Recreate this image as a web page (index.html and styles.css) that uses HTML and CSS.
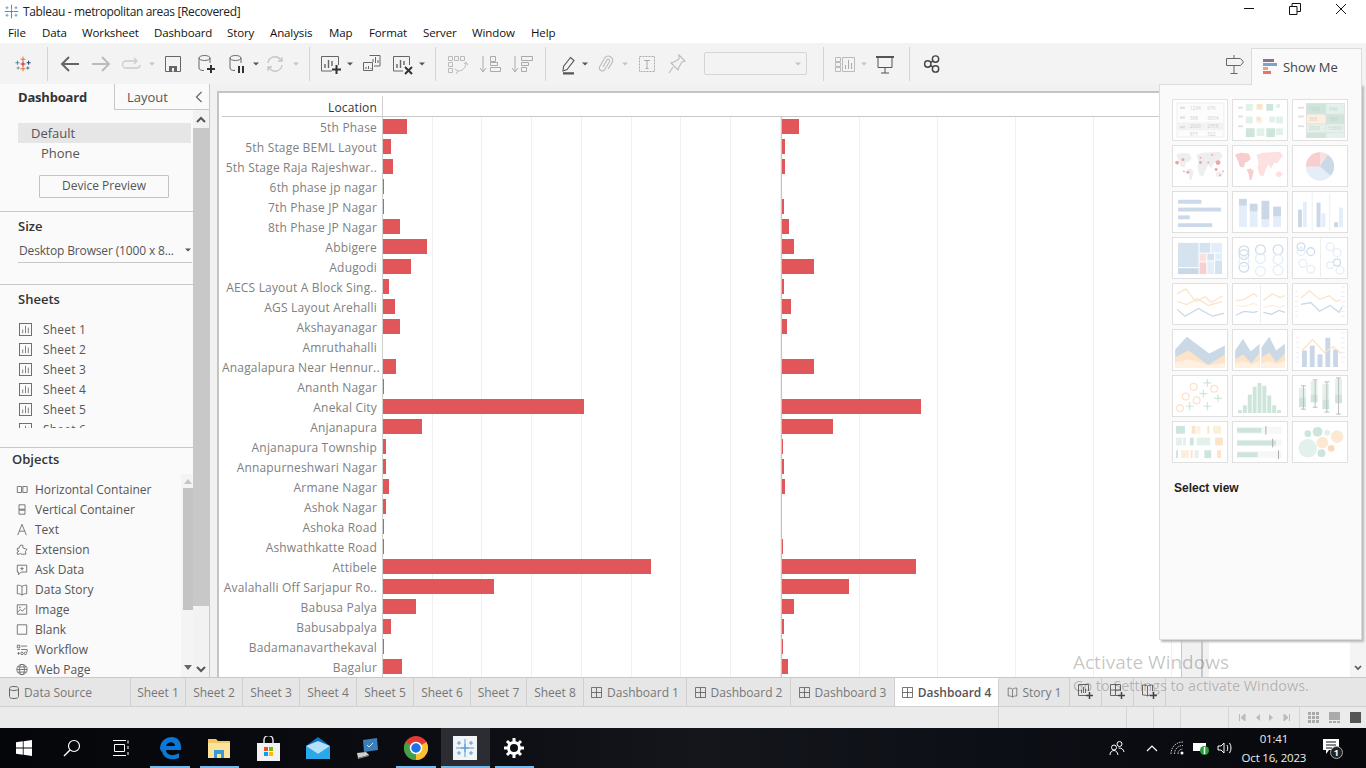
FILE: index.html
```html
<!DOCTYPE html>
<html lang="en">
<head>
<meta charset="utf-8">
<title>Tableau - metropolitan areas [Recovered]</title>
<link rel="stylesheet" href="styles.css">
</head>
<body>
<svg class="sprite" width="0" height="0">
  <symbol id="sheet" viewBox="0 0 14 14"><rect x=".5" y=".5" width="13" height="13" fill="none" stroke="#666"/><path d="M4 11V7M7 11V3M10 11V5" stroke="#777" fill="none"/></symbol>
  <symbol id="dash" viewBox="0 0 12 12"><path d="M.5.5h11v11H.5zM6 .5v11M.5 6h11" fill="none" stroke="#666"/></symbol>
  <symbol id="snow" viewBox="0 0 20 20"><g stroke="#3f8fc4" stroke-width="1.400" fill="none"><path d="M10 1v6M10 13v6M1 10h6M13 10h6M7.500 10h5M10 7.500v5"/><path d="M4 3v4M2 5h4M16 3v4M14 5h4M4 13v4M2 15h4M16 13v4M14 15h4" stroke="#6aa9d2"/></g></symbol>
</svg>

<header class="titlebar">
  <svg class="title-icon" width="15" height="15"><use href="#snow"/></svg>
  <span class="title-text">Tableau - metropolitan areas [Recovered]</span>
  <div class="win-controls">
    <svg width="12" height="12" viewBox="0 0 12 12"><path d="M1 5.500h10" stroke="#111"/></svg>
    <svg width="12" height="12" viewBox="0 0 12 12"><path d="M.5 3.500h7.500v8H.5zM3 3.500V.5h8.500v8H8" fill="none" stroke="#111"/></svg>
    <svg width="12" height="12" viewBox="0 0 12 12"><path d="M1 1l10 10M11 1L1 11" stroke="#111"/></svg>
  </div>
</header>

<nav class="menubar">
  <span>File</span><span>Data</span><span>Worksheet</span><span>Dashboard</span><span>Story</span><span>Analysis</span><span>Map</span><span>Format</span><span>Server</span><span>Window</span><span>Help</span>
</nav>

<div class="toolbar">
  <svg class="ic" viewBox="-3 -3 30 30"><g fill="none" stroke-width="1.300"><path d="M12 3v6M9 6h6M12 15v6M9 18h6" stroke="#e8762b"/><path d="M5 8v5M2.500 10.500h5" stroke="#59879b"/><path d="M19 8v5M16.500 10.500h5" stroke="#1f447a"/><path d="M12 9v6M9 12h6" stroke="#c72037"/><path d="M6 15v4M4 17h4" stroke="#7099a6"/><path d="M18 15v4M16 17h4" stroke="#5b6591"/></g></svg>
  <i class="div m12"></i>
  <svg class="ic m10" viewBox="0 0 24 24"><path d="M21 12H5M11 5l-7 7 7 7" fill="none" stroke="#666" stroke-width="2"/></svg>
  <svg class="ic m7" viewBox="0 0 24 24"><path d="M3 12h16M13 5l7 7-7 7" fill="none" stroke="#bbb" stroke-width="2"/></svg>
  <svg class="ic m6" viewBox="0 0 24 24"><path d="M17 9H7a3 3 0 0 0 0 7h11a3 3 0 0 0 3-3M15 6l3 3-3 3" fill="none" stroke="#ccc" stroke-width="1.300"/></svg>
  <b class="caret off m5"></b>
  <svg class="ic m5" viewBox="0 0 24 24"><path d="M4.500 4.500h15v15h-15z" fill="none" stroke="#666"/><path d="M8 14h8v5.500H8z" fill="#666"/><path d="M11 16h2v3.500h-2z" fill="#f3f3f3"/></svg>
  <svg class="ic m8" viewBox="0 0 24 24"><path d="M6 6v10c0 1.500 1.500 2.500 5 2.500M17 6v5" fill="none" stroke="#666"/><ellipse cx="11.500" cy="6" rx="5.500" ry="2.500" fill="none" stroke="#666"/><path d="M18 13v8M14 17h8" stroke="#333" stroke-width="2"/></svg>
  <svg class="ic m7" viewBox="0 0 24 24"><path d="M6 6v10c0 1.500 1.500 2.500 5 2.500M17 6v5" fill="none" stroke="#666"/><ellipse cx="11.500" cy="6" rx="5.500" ry="2.500" fill="none" stroke="#666"/><path d="M15 14v7M19 14v7" stroke="#333" stroke-width="2"/></svg>
  <b class="caret m4"></b>
  <svg class="ic m3" viewBox="0 0 24 24"><path d="M5 11a7 7 0 0 1 12-4l2 2M19 13a7 7 0 0 1-12 4l-2-2M19 5v4h-4M5 19v-4h4" fill="none" stroke="#c4c4c4" stroke-width="1.300"/></svg>
  <b class="caret off m5"></b>
  <i class="div m9"></i>
  <svg class="ic m8" viewBox="0 0 24 24"><path d="M14 19H3.500V4.500h17V13" fill="none" stroke="#666"/><path d="M7 16v-4M10.500 16V8M14 14V9" stroke="#666" stroke-width="1.400"/><path d="M18.500 13v9M14 17.500h9" stroke="#333" stroke-width="2"/></svg>
  <b class="caret m4"></b>
  <svg class="ic m5" viewBox="0 0 24 24"><path d="M10.500 3.500H21v10.500h-6M4.500 10.500h9v8h-9z" fill="none" stroke="#666"/><path d="M14 10V7M16.500 11V5M19 11V8M7 17v-2M9.500 17v-3M12 17v-1" stroke="#666"/></svg>
  <svg class="ic m7" viewBox="0 0 24 24"><path d="M13 19H3.500V4.500h16V13" fill="none" stroke="#666"/><path d="M7 16v-4M10.500 16V8M14 13V9" stroke="#666" stroke-width="1.400"/><path d="M15 15l7 7M22 15l-7 7" stroke="#333" stroke-width="2"/></svg>
  <b class="caret m4"></b>
  <i class="div m9"></i>
  <svg class="ic m9" viewBox="0 0 24 24"><path d="M3.500 4.500h4v4h-4zM9.500 4.500h4v4h-4zM15.500 4.500h4v4h-4zM3.500 10.500h4v4h-4zM3.500 16.500h4v4h-4z" fill="none" stroke="#bbb"/><path d="M21 11c0 5-4 8-8 8M10 17l3 2-2 3M19 12l2-2 2 3" fill="none" stroke="#bbb"/></svg>
  <svg class="ic m9" viewBox="0 0 24 24"><path d="M5 4v15M2 16l3 4 3-4" fill="none" stroke="#aaa"/><path d="M12.500 4.500h5v5h-5zM12.500 10.500h7v3h-7zM12.500 15.500h10v4h-10z" fill="none" stroke="#aaa"/></svg>
  <svg class="ic m8" viewBox="0 0 24 24"><path d="M5 4v15M2 16l3 4 3-4" fill="none" stroke="#aaa"/><path d="M11.500 4.500h11v4h-11zM11.500 10.500h7v3h-7zM11.500 15.500h5v4h-5z" fill="none" stroke="#aaa"/></svg>
  <i class="div m11"></i>
  <svg class="ic m10" viewBox="0 0 24 24"><path d="M14.500 5.500l3.500 3-7 9-4 1.500.5-4.500zM7 21h11" fill="none" stroke="#555" stroke-width="1.100"/><path d="M7 21.500h11" stroke="#555" stroke-width="2"/></svg>
  <b class="caret m1"></b>
  <svg class="ic m4" viewBox="0 0 24 24"><path d="M10 15l4-7a1.500 1.500 0 0 1 2.600 1.500L11.500 18a3 3 0 0 1-5-3l5.500-9.500a4.500 4.500 0 0 1 7.500 4.500L15 17" fill="none" stroke="#bbb" stroke-width="1.100"/></svg>
  <b class="caret off m4"></b>
  <svg class="ic m6" viewBox="0 0 24 24"><path d="M4.500 4.500h15v15h-15z" fill="none" stroke="#aaa" stroke-dasharray="2 1"/><path d="M9 8.500h6M12 8.500v8M10.500 16.500h3" stroke="#aaa" fill="none"/></svg>
  <svg class="ic m6" viewBox="0 0 24 24"><path d="M14 3l6 6-3 1-3 5-1 3-7-7 3-1 5-3zM8 15l-4 6" fill="none" stroke="#bbb" stroke-width="1.100"/></svg>
  <div class="tb-select m15"><b class="caret off"></b></div>
  <i class="div m16"></i>
  <svg class="ic m9" viewBox="0 0 24 24"><path d="M2.500 5.500h5v4h-5zM2.500 10.500h5v4h-5zM2.500 15.500h5v4h-5zM9.500 5.500h12v14h-12z" fill="none" stroke="#bbb"/><path d="M12.500 17v-4M15.500 17V8M18.500 17v-6" stroke="#aaa"/></svg>
  <b class="caret off m3"></b>
  <svg class="ic m5" viewBox="0 0 24 24"><path d="M3 5h18" stroke="#555" stroke-width="2"/><path d="M5 5v10.500h14V5M12 15.500V21M8 21h8" fill="none" stroke="#555"/></svg>
  <i class="div m12"></i>
  <svg class="ic m10" viewBox="-5 -5 34 34"><g fill="none" stroke="#444" stroke-width="2"><circle cx="6" cy="12" r="4.500"/><circle cx="17" cy="5" r="4.500"/><circle cx="17" cy="19" r="4.500"/><path d="M10 10l3.500-2.500M10 14l3.500 2.500"/></g></svg>
  <svg class="ic sign" viewBox="0 0 24 24"><path d="M3.500 6.500h14l3 3.500-3 3.500h-14zM11 3v3M11 14v8M7.500 21.500h7" fill="none" stroke="#666"/></svg>
</div>

<main class="workspace">
  <aside class="side">
    <div class="side-tabs">
      <span class="stab active">Dashboard</span>
      <span class="stab">Layout</span>
      <svg class="collapse" width="8" height="12" viewBox="0 0 8 12"><path d="M6.500 1l-5 5 5 5" fill="none" stroke="#666" stroke-width="1.200"/></svg>
    </div>
    <div class="side-body">
      <div class="side-col">
        <section class="sec sec-dash">
          <div class="device selected">Default</div>
          <div class="device phone">Phone</div>
          <div class="btn">Device Preview</div>
        </section>
        <section class="sec sec-size">
          <h3>Size</h3>
          <div class="size-select"><span>Desktop Browser (1000 x 8...</span><b class="caret"></b></div>
        </section>
        <section class="sec sec-sheets">
          <h3>Sheets</h3>
          <ul class="sheets">
            <li><svg width="13" height="13"><use href="#sheet"/></svg>Sheet 1</li>
            <li><svg width="13" height="13"><use href="#sheet"/></svg>Sheet 2</li>
            <li><svg width="13" height="13"><use href="#sheet"/></svg>Sheet 3</li>
            <li><svg width="13" height="13"><use href="#sheet"/></svg>Sheet 4</li>
            <li><svg width="13" height="13"><use href="#sheet"/></svg>Sheet 5</li>
            <li><svg width="13" height="13"><use href="#sheet"/></svg>Sheet 6</li>
          </ul>
        </section>
        <section class="sec sec-objects">
          <h3 class="obj-title">Objects</h3>
          <div class="obj-wrap">
            <ul class="objects">
              <li><svg viewBox="0 0 14 14"><path d="M1.500 3.500h5v7h-5zM8 3.500h5v7H8z" fill="none" stroke="#666"/></svg>Horizontal Container</li>
              <li><svg viewBox="0 0 14 14"><path d="M3.500 1.500h7v11h-7z" fill="none" stroke="#666"/><path d="M3.500 6h7v2.500h-7z" fill="#888"/></svg>Vertical Container</li>
              <li><svg viewBox="0 0 14 14"><path d="M2 13.500L7 1l5 12.500M4 9h6" fill="none" stroke="#666"/></svg>Text</li>
              <li><svg viewBox="0 0 14 14"><path d="M1.500 5.500h2L5 2h3v3l5 2-2 2 .5 3.500H6l-1-1-1 1H1.500V10l2-1-2-1z" fill="none" stroke="#666"/></svg>Extension</li>
              <li><svg viewBox="0 0 14 14"><path d="M1.500 2h11v8H6l-3 3v-3H1.500z" fill="none" stroke="#666"/><path d="M5 6h4M7 4v4" stroke="#666"/></svg>Ask Data</li>
              <li><svg viewBox="0 0 14 14"><path d="M7 3.500C5.500 2 3 2 1.500 2v10c1.500 0 4 0 5.500 1.500 1.500-1.500 4-1.500 5.500-1.500V2C11 2 8.500 2 7 3.500zM7 3.500v10" fill="none" stroke="#666"/></svg>Data Story</li>
              <li><svg viewBox="0 0 14 14"><path d="M1.500 1.500h11v11h-11z" fill="none" stroke="#666"/><path d="M2 10l3-3 2.500 2L11 5" fill="none" stroke="#666"/><circle cx="4.500" cy="4.500" r="1" fill="#888"/></svg>Image</li>
              <li><svg viewBox="0 0 14 14"><path d="M1.500 1.500h11v11h-11z" fill="none" stroke="#666"/></svg>Blank</li>
              <li><svg viewBox="0 0 14 14"><path d="M1.500 2h3v3h-3zM6 3h7M6 7h7v3M1.500 7h3M3 10v3M1.500 11.500h3" fill="none" stroke="#666"/><circle cx="11" cy="11.500" r="1.500" fill="none" stroke="#666"/><circle cx="7" cy="11.500" r="1.500" fill="none" stroke="#666"/></svg>Workflow</li>
              <li><svg viewBox="0 0 14 14"><g fill="none" stroke="#666"><circle cx="7" cy="7" r="6"/><ellipse cx="7" cy="7" rx="2.800" ry="6"/><path d="M1 7h12M2 4h10M2 10h10"/></g></svg>Web Page</li>
            </ul>
            <div class="inner-scroll">
              <i class="up-tri"></i>
              <i class="inner-thumb"></i>
              <i class="down-tri"></i>
            </div>
          </div>
        </section>
      </div>
      <div class="outer-scroll">
        <svg class="chev" width="12" height="10" viewBox="0 0 12 10"><path d="M2 7l4-4 4 4" fill="none" stroke="#555" stroke-width="2"/></svg>
        <i class="outer-thumb"></i>
        <svg class="chev end" width="12" height="10" viewBox="0 0 12 10"><path d="M2 3l4 4 4-4" fill="none" stroke="#555" stroke-width="2"/></svg>
      </div>
    </div>
  </aside>

  <div class="canvas">
    <div class="frame">
      <div class="chart-head"><span class="loc-label">Location</span><span class="loc-rest"></span></div>
      <div class="rows">
        <div class="row"><span class="lab">5th Phase</span><div class="pl"><i class="bar" style="width:24px"></i></div><div class="pr"><i class="bar" style="width:17px"></i></div></div>
        <div class="row"><span class="lab">5th Stage BEML Layout</span><div class="pl"><i class="bar" style="width:8px"></i></div><div class="pr"><i class="bar" style="width:3px"></i></div></div>
        <div class="row"><span class="lab">5th Stage Raja Rajeshwar..</span><div class="pl"><i class="bar" style="width:10px"></i></div><div class="pr"><i class="bar" style="width:3px"></i></div></div>
        <div class="row"><span class="lab">6th phase jp nagar</span><div class="pl"><i class="bar" style="width:1px"></i></div><div class="pr"></div></div>
        <div class="row"><span class="lab">7th Phase JP Nagar</span><div class="pl"><i class="bar" style="width:1px"></i></div><div class="pr"><i class="bar" style="width:2px"></i></div></div>
        <div class="row"><span class="lab">8th Phase JP Nagar</span><div class="pl"><i class="bar" style="width:17px"></i></div><div class="pr"><i class="bar" style="width:7px"></i></div></div>
        <div class="row"><span class="lab">Abbigere</span><div class="pl"><i class="bar" style="width:44px"></i></div><div class="pr"><i class="bar" style="width:12px"></i></div></div>
        <div class="row"><span class="lab">Adugodi</span><div class="pl"><i class="bar" style="width:28px"></i></div><div class="pr"><i class="bar" style="width:32px"></i></div></div>
        <div class="row"><span class="lab">AECS Layout A Block Sing..</span><div class="pl"><i class="bar" style="width:6px"></i></div><div class="pr"><i class="bar" style="width:2px"></i></div></div>
        <div class="row"><span class="lab">AGS Layout Arehalli</span><div class="pl"><i class="bar" style="width:12px"></i></div><div class="pr"><i class="bar" style="width:9px"></i></div></div>
        <div class="row"><span class="lab">Akshayanagar</span><div class="pl"><i class="bar" style="width:17px"></i></div><div class="pr"><i class="bar" style="width:5px"></i></div></div>
        <div class="row"><span class="lab">Amruthahalli</span><div class="pl"></div><div class="pr"></div></div>
        <div class="row"><span class="lab">Anagalapura Near Hennur..</span><div class="pl"><i class="bar" style="width:13px"></i></div><div class="pr"><i class="bar" style="width:32px"></i></div></div>
        <div class="row"><span class="lab">Ananth Nagar</span><div class="pl"><i class="bar" style="width:1px"></i></div><div class="pr"></div></div>
        <div class="row"><span class="lab">Anekal City</span><div class="pl"><i class="bar" style="width:201px"></i></div><div class="pr"><i class="bar" style="width:139px"></i></div></div>
        <div class="row"><span class="lab">Anjanapura</span><div class="pl"><i class="bar" style="width:39px"></i></div><div class="pr"><i class="bar" style="width:51px"></i></div></div>
        <div class="row"><span class="lab">Anjanapura Township</span><div class="pl"><i class="bar" style="width:3px"></i></div><div class="pr"><i class="bar" style="width:1px"></i></div></div>
        <div class="row"><span class="lab">Annapurneshwari Nagar</span><div class="pl"><i class="bar" style="width:3px"></i></div><div class="pr"><i class="bar" style="width:2px"></i></div></div>
        <div class="row"><span class="lab">Armane Nagar</span><div class="pl"><i class="bar" style="width:6px"></i></div><div class="pr"><i class="bar" style="width:3px"></i></div></div>
        <div class="row"><span class="lab">Ashok Nagar</span><div class="pl"><i class="bar" style="width:3px"></i></div><div class="pr"></div></div>
        <div class="row"><span class="lab">Ashoka Road</span><div class="pl"><i class="bar" style="width:1px"></i></div><div class="pr"></div></div>
        <div class="row"><span class="lab">Ashwathkatte Road</span><div class="pl"><i class="bar" style="width:1px"></i></div><div class="pr"><i class="bar" style="width:1px"></i></div></div>
        <div class="row"><span class="lab">Attibele</span><div class="pl"><i class="bar" style="width:268px"></i></div><div class="pr"><i class="bar" style="width:134px"></i></div></div>
        <div class="row"><span class="lab">Avalahalli Off Sarjapur Ro..</span><div class="pl"><i class="bar" style="width:111px"></i></div><div class="pr"><i class="bar" style="width:67px"></i></div></div>
        <div class="row"><span class="lab">Babusa Palya</span><div class="pl"><i class="bar" style="width:33px"></i></div><div class="pr"><i class="bar" style="width:12px"></i></div></div>
        <div class="row"><span class="lab">Babusabpalya</span><div class="pl"><i class="bar" style="width:8px"></i></div><div class="pr"><i class="bar" style="width:2px"></i></div></div>
        <div class="row"><span class="lab">Badamanavarthekaval</span><div class="pl"><i class="bar" style="width:1px"></i></div><div class="pr"><i class="bar" style="width:1px"></i></div></div>
        <div class="row"><span class="lab">Bagalur</span><div class="pl"><i class="bar" style="width:19px"></i></div><div class="pr"><i class="bar" style="width:6px"></i></div></div>
      </div>
    </div>
    <div class="strip"></div>
    <div class="blank"></div>
    <div class="right-scroll"><svg width="10" height="8" viewBox="0 0 10 8"><path d="M2 2l3 3 3-3" fill="none" stroke="#555" stroke-width="1.600"/></svg></div>
  </div>
</main>

<div class="showme-tab">
  <svg width="14" height="16" viewBox="0 0 14 16"><path d="M0 0h11v3H0z" fill="#8a7099"/><path d="M0 4h14v3H0z" fill="#7fa3c8"/><path d="M0 8h5v3H0z" fill="#f2a26b"/><path d="M0 12h8v3H0z" fill="#ee6f72"/></svg>
  <span>Show Me</span>
</div>
<aside class="showme">
  <div class="thumbs">
    <div class="thumb"><svg viewBox="0 0 55 41"><rect x="4" y="3" width="48" height="35" fill="#fcfcfc" stroke="#eee"/><rect x="4" y="23" width="48" height="8" fill="#f3f3f3"/><path d="M7 8h5M7 18h5M7 28h5" stroke="#ddd" stroke-width="2"/><g class="t-txt"><text x="17" y="10">1234</text><text x="35" y="10">676</text><text x="17" y="20">368</text><text x="35" y="20">3034</text><text x="17" y="29">2929</text><text x="35" y="29">2558</text><text x="17" y="37">971</text><text x="35" y="37">322</text></g></svg></div>
    <div class="thumb"><svg viewBox="0 0 55 41"><path d="M5 8h5M5 17h5M5 27h5" stroke="#e2e2e2" stroke-width="2"/><g fill="#e2f1e9"><rect x="13" y="4" width="7" height="7"/><rect x="13" y="17" width="7" height="7"/><rect x="37" y="17" width="6" height="6"/><rect x="44" y="17" width="7" height="7"/><rect x="24" y="29" width="8" height="8"/><rect x="44" y="29" width="7" height="7"/></g><g fill="#cde5da"><rect x="34" y="4" width="7" height="7"/><rect x="13" y="29" width="9" height="9"/><rect x="34" y="29" width="9" height="9"/><rect x="24" y="18" width="6" height="6" fill="#fdf1e3"/></g><rect x="24" y="4" width="6" height="6" fill="#fde3c8"/><rect x="24" y="17" width="4" height="4" fill="#fde3c8"/><rect x="44" y="4" width="4" height="4" fill="#e2f1e9"/></svg></div>
    <div class="thumb"><svg viewBox="0 0 55 41"><path d="M5 8h6M5 17h6M5 27h6" stroke="#e2e2e2" stroke-width="2"/><path d="M13 3h40v36H13z" fill="#e2e2e2"/><rect x="14" y="4" width="19" height="10" fill="#cde5da"/><rect x="34" y="4" width="18" height="10" fill="#e2f1e9"/><rect x="14" y="15" width="19" height="9" fill="#feeedd"/><rect x="34" y="15" width="18" height="9" fill="#cde5da"/><rect x="14" y="25" width="19" height="8" fill="#e2f1e9"/><rect x="34" y="25" width="18" height="8" fill="#e2f1e9"/><rect x="14" y="34" width="19" height="5" fill="#cde5da"/><rect x="34" y="34" width="18" height="5" fill="#e2f1e9"/><g class="t-txt"><text x="16" y="11">1234</text><text x="37" y="11">546</text><text x="16" y="22">368</text><text x="37" y="22">368</text><text x="16" y="31">2929</text><text x="36" y="31">53890</text></g></svg></div>

    <div class="thumb"><svg viewBox="0 0 55 41"><path d="M3 9l6-2 8 1 2 5-3 3-3 1-1 5-4-1-2-6zM14 24l4-1 3 3-2 8-2 1-1-6zM24 9l6-2 18-1 3 4-4 5-2 3-3-1-3 6-3-4-3 6-2 6-4-1-2-8 1-5zM44 27l4-1 3 3-3 3-4-1z" fill="#eeeeee"/><g fill="#e9a7a7"><circle cx="4" cy="17" r="2"/><circle cx="10" cy="14" r="1.500"/><circle cx="28" cy="12" r="1"/><circle cx="28" cy="17" r="1.500"/><circle cx="40" cy="9" r="1"/><circle cx="46" cy="17" r="2.500"/><circle cx="36" cy="17" r="1"/><circle cx="44" cy="24" r="1.500"/><circle cx="51" cy="26" r="1"/><circle cx="48" cy="30" r="1"/><circle cx="11" cy="26" r="1"/><circle cx="15" cy="27" r="1.500"/></g></svg></div>
    <div class="thumb"><svg viewBox="0 0 55 41"><path d="M2 9l6-2 8 1 2 5-3 3-3 1-1 5-4-1-2-6zM14 24l4-1 3 3-2 8-2 1-1-6zM24 9l6-2 18-1 3 4-4 5-2 3-3-1-3 6-3-4-3 6-2 6-4-1-2-8 1-5zM44 27l4-1 3 3-3 3-4-1z" fill="#fde1e1"/><path d="M2 9l6-2 8 1 2 5-3 3-3 1-1 5-4-1-2-6zM14 24l4-1 3 3-2 8-2 1-1-6z" fill="#f8cdcd"/></svg></div>
    <div class="thumb"><svg viewBox="0 0 55 41"><circle cx="27.500" cy="21" r="14.500" fill="#e5eef8"/><path d="M27.500 21L27.500 6.500A14.500 14.500 0 0 0 13 21z" fill="#f7cfcf"/><path d="M27.500 21V6.500a14.500 14.500 0 0 1 8 2.500z" fill="#fbe0e0"/><path d="M27.500 21l8-12a14.500 14.500 0 0 1 3 21.500z" fill="#cbd9e7"/></svg></div>

    <div class="thumb"><svg viewBox="0 0 55 41"><g fill="#ccd9e8"><rect x="5" y="8" width="24" height="4"/><rect x="5" y="16" width="44" height="4"/><rect x="5" y="24" width="12" height="4"/><rect x="5" y="32" width="35" height="4"/></g></svg></div>
    <div class="thumb"><svg viewBox="0 0 55 41"><g fill="#e3eefa"><rect x="6" y="14" width="8" height="22"/><rect x="17" y="20" width="8" height="16"/><rect x="29" y="28" width="8" height="8"/><rect x="41" y="25" width="8" height="11"/></g><g fill="#c9d7e6"><rect x="6" y="7" width="8" height="7"/><rect x="17" y="12" width="8" height="8"/><rect x="29" y="9" width="8" height="19"/><rect x="41" y="15" width="8" height="10"/></g></svg></div>
    <div class="thumb"><svg viewBox="0 0 55 41"><path d="M19.500 1v39M37.500 1v39" stroke="#eee"/><rect x="5" y="18" width="4" height="18" fill="#c9d7e6"/><rect x="10" y="10" width="4" height="26" fill="#e3eefa"/><rect x="24" y="11" width="4" height="25" fill="#c9d7e6"/><rect x="29" y="22" width="4" height="14" fill="#e3eefa"/><rect x="42" y="31" width="4" height="5" fill="#c9d7e6"/><rect x="47" y="16" width="4" height="20" fill="#e3eefa"/></svg></div>

    <div class="thumb"><svg viewBox="0 0 55 41"><rect x="5" y="5" width="21" height="25" fill="#d5e2ef"/><rect x="5" y="31" width="21" height="6" fill="#c9d7e6"/><rect x="27" y="5" width="11" height="10" fill="#d5e2ef"/><rect x="39" y="5" width="11" height="10" fill="#e3eefa"/><rect x="27" y="16" width="7" height="8" fill="#fbe0e0"/><rect x="35" y="16" width="7" height="7" fill="#d5e2ef"/><rect x="43" y="16" width="7" height="6" fill="#e3eefa"/><rect x="27" y="25" width="7" height="12" fill="#f7cfcf"/><rect x="35" y="24" width="7" height="13" fill="#e3eefa"/><rect x="43" y="23" width="7" height="14" fill="#d5e2ef"/></svg></div>
    <div class="thumb"><svg viewBox="0 0 55 41"><g fill="none" stroke="#cfdce9" stroke-width="1.300"><circle cx="11" cy="13" r="5"/><circle cx="11" cy="17" r="5"/><circle cx="28" cy="12" r="5"/><circle cx="46" cy="12" r="5"/><circle cx="11" cy="30" r="5"/></g><g fill="none" stroke="#e3eefa" stroke-width="1.300"><circle cx="11" cy="24" r="5"/><circle cx="28" cy="21" r="5"/><circle cx="28" cy="34" r="5"/><circle cx="46" cy="22" r="5"/><circle cx="46" cy="33" r="5"/></g></svg></div>
    <div class="thumb"><svg viewBox="0 0 55 41"><path d="M28 1v39" stroke="#eee"/><g fill="none" stroke="#cfdce9" stroke-width="1.300"><circle cx="8" cy="9" r="4"/><circle cx="18" cy="14" r="4"/><circle cx="45" cy="25" r="3.500"/></g><g fill="none" stroke="#e3eefa" stroke-width="1.300"><circle cx="8" cy="14" r="4"/><circle cx="38" cy="9" r="4"/><circle cx="45" cy="15" r="4"/><circle cx="10" cy="26" r="4"/><circle cx="18" cy="32" r="4"/><circle cx="38" cy="28" r="3.500"/><circle cx="48" cy="33" r="4"/></g></svg></div>

    <div class="thumb"><svg viewBox="0 0 55 41"><g fill="none" stroke-width="1.300"><path d="M4 10l9-5 10 13 10-5 6 6 12-7" stroke="#fde3c8"/><path d="M4 18l10 3 11-6 11 7 14-4" stroke="#fde3c8"/><path d="M4 26l8 7 14-8 14 8 12-3" stroke="#c9d7e6"/></g></svg></div>
    <div class="thumb"><svg viewBox="0 0 55 41"><path d="M28 1v39" stroke="#eee"/><g fill="none" stroke-width="1.300"><path d="M3 17l8-1 10-6 4 3" stroke="#fde3c8"/><path d="M3 22l8 1 10-3 4 2" stroke="#fdf0dd"/><path d="M3 32l8-4 10 1 4-1" stroke="#c9d7e6"/><path d="M31 17l9-7 8 4 5-2" stroke="#fde3c8"/><path d="M31 24l9-2 8 2 5-2" stroke="#fdf0dd"/><path d="M31 29l8 2 8-4 6 2" stroke="#c9d7e6"/></g></svg></div>
    <div class="thumb"><svg viewBox="0 0 55 41"><path d="M49 3h4M49 8h4M49 13h4M49 18h4M49 23h4M49 28h4M49 33h4M2 8h3M2 13h3M2 18h3M2 23h3M2 28h3M2 33h3" stroke="#eee"/><g fill="none" stroke-width="1.300"><path d="M8 14l9-7 10 9 10-4 7 6 4-2" stroke="#fde3c8"/><path d="M8 21l10-2 9 9 11-6 9 7 3-5" stroke="#c9d7e6"/></g></svg></div>

    <div class="thumb"><svg viewBox="0 0 55 41"><path d="M2 20l12-13 23 17 16-8v23H2z" fill="#cbd9e7"/><path d="M2 28l14-7 20 15 17-11v14H2z" fill="#fde3c8"/><path d="M2 33l14-3 20 6 17-2v5H2z" fill="#fef1e2"/></svg></div>
    <div class="thumb"><svg viewBox="0 0 55 41"><path d="M2 21l8-12 8 13 9-8v25H2z" fill="#cbd9e7"/><path d="M2 30l8-5 9 9 8-11v16H2z" fill="#fde3c8"/><path d="M2 34l8-2 9 3 8-3v7H2z" fill="#fef1e2"/><path d="M29 18l8-11 7 14 9-7v25H29z" fill="#cbd9e7"/><path d="M29 28l8-5 7 10 9-9v15H29z" fill="#fde3c8"/><path d="M29 34l8-2 7 3 9-3v7H29z" fill="#fef1e2"/></svg></div>
    <div class="thumb"><svg viewBox="0 0 55 41"><path d="M49 3h4M49 8h4M49 13h4M49 18h4M49 23h4M49 28h4M49 33h4M3 8h3M3 13h3M3 18h3M3 23h3M3 28h3M3 33h3" stroke="#eee"/><g fill="#c9d7e6"><rect x="9" y="21" width="5" height="17"/><rect x="17" y="16" width="5" height="22"/><rect x="25" y="25" width="5" height="13"/><rect x="33" y="8" width="5" height="30"/><rect x="41" y="20" width="5" height="18"/></g><path d="M9 21l11-11 12 13 9-6 8 7" fill="none" stroke="#fde3c8" stroke-width="1.300"/></svg></div>

    <div class="thumb"><svg viewBox="0 0 55 41"><g fill="none" stroke="#fde3c8" stroke-width="1.300"><circle cx="21" cy="11" r="3.500"/><circle cx="42" cy="13" r="3.500"/><circle cx="13" cy="21" r="3.500"/><circle cx="24" cy="25" r="3.500"/><circle cx="7" cy="33" r="3.500"/></g><path d="M35 3v8M31 7h8M31 14v8M27 18h8M46 19v8M42 23h8M17 27v8M13 31h8M35 27v8M31 31h8" fill="none" stroke="#cde5da" stroke-width="1.200"/></svg></div>
    <div class="thumb"><svg viewBox="0 0 55 41"><g fill="#cde5da"><rect x="5" y="35" width="4" height="3"/><rect x="10" y="30" width="4" height="8"/><rect x="15" y="19" width="4" height="19"/><rect x="20" y="11" width="4" height="27"/><rect x="25" y="7" width="4" height="31"/><rect x="30" y="10" width="4" height="28"/><rect x="35" y="20" width="4" height="18"/><rect x="40" y="30" width="4" height="8"/><rect x="45" y="35" width="4" height="3"/></g></svg></div>
    <div class="thumb"><svg viewBox="0 0 55 41"><g fill="#e2f1e9"><rect x="6" y="12" width="7" height="10"/><rect x="18" y="5" width="7" height="14"/><rect x="30" y="8" width="7" height="16"/><rect x="43" y="3" width="7" height="16"/></g><g fill="#cde5da"><rect x="6" y="22" width="7" height="10"/><rect x="18" y="19" width="7" height="8"/><rect x="30" y="24" width="7" height="10"/><rect x="43" y="19" width="7" height="9"/></g><path d="M8 10h5M10.500 10v24M8 34h5M20 4h5M22.500 4v28M20 32h5M32 6h5M34.500 6v31M32 37h5M44 2h5M46.500 2v37M44 39h5" fill="none" stroke="#bbb"/></svg></div>

    <div class="thumb"><svg viewBox="0 0 55 41"><rect x="3" y="4" width="9" height="8" fill="#cde5da"/><rect x="19" y="4" width="4" height="8" fill="#fde3c8"/><rect x="24" y="4" width="4" height="8" fill="#fef1e2"/><rect x="35" y="4" width="2" height="8" fill="#fde3c8"/><rect x="41" y="4" width="8" height="8" fill="#feeedd"/><rect x="3" y="16" width="6" height="8" fill="#e2f1e9"/><rect x="10" y="16" width="3" height="8" fill="#e2f1e9"/><rect x="17" y="16" width="4" height="8" fill="#cde5da"/><rect x="24" y="16" width="14" height="8" fill="#e2f1e9"/><rect x="43" y="16" width="8" height="8" fill="#fde3c8"/><rect x="3" y="29" width="2" height="8" fill="#cde5da"/><rect x="8" y="29" width="8" height="8" fill="#feeedd"/><rect x="18" y="29" width="2" height="8" fill="#fde3c8"/><rect x="22" y="29" width="4" height="8" fill="#e2f1e9"/><rect x="32" y="29" width="7" height="8" fill="#cde5da"/><rect x="45" y="29" width="4" height="8" fill="#fde3c8"/></svg></div>
    <div class="thumb"><svg viewBox="0 0 55 41"><g fill="#f7f7f7"><rect x="4" y="5" width="46" height="7"/><rect x="4" y="18" width="46" height="7"/><rect x="4" y="30" width="46" height="7"/></g><g fill="#cde5da"><rect x="4" y="6" width="25" height="5"/><rect x="4" y="19" width="40" height="5"/><rect x="4" y="31" width="21" height="5"/></g><path d="M33.500 4v9M40.500 17v9M46.500 29v9" stroke="#aaa"/></svg></div>
    <div class="thumb"><svg viewBox="0 0 55 41"><circle cx="15" cy="27" r="9.500" fill="#e2f1e9"/><circle cx="15" cy="12" r="3.500" fill="#cde5da"/><circle cx="25" cy="10" r="5" fill="#cde5da"/><circle cx="35" cy="11" r="3" fill="#e2f1e9"/><circle cx="30" cy="21" r="6" fill="#fde8d3"/><circle cx="45" cy="15" r="6.500" fill="#fde8d3"/><circle cx="39" cy="27" r="3.500" fill="#fbd9b8"/><circle cx="29" cy="32" r="4" fill="#cde5da"/></svg></div>
  </div>
  <p class="select-view">Select view</p>
</aside>

<nav class="tabs">
  <span class="tab ds"><svg width="10" height="13" viewBox="0 0 10 13"><path d="M.5 2.500v8c0 1 1 2 4.500 2s4.500-1 4.500-2v-8M.5 2.500c0-1 1-2 4.500-2s4.500 1 4.500 2-1 2-4.500 2-4.500-1-4.500-2z" fill="none" stroke="#666"/></svg>Data Source</span>
  <span class="tab">Sheet 1</span><span class="tab">Sheet 2</span><span class="tab">Sheet 3</span><span class="tab">Sheet 4</span><span class="tab">Sheet 5</span><span class="tab">Sheet 6</span><span class="tab">Sheet 7</span><span class="tab">Sheet 8</span>
  <span class="tab"><svg width="11" height="11"><use href="#dash"/></svg>Dashboard 1</span>
  <span class="tab"><svg width="11" height="11"><use href="#dash"/></svg>Dashboard 2</span>
  <span class="tab"><svg width="11" height="11"><use href="#dash"/></svg>Dashboard 3</span>
  <span class="tab current"><svg width="11" height="11"><use href="#dash"/></svg>Dashboard 4</span>
  <span class="tab"><svg width="11" height="12" viewBox="0 0 14 14"><path d="M7 3.500C5.500 2 3 2 1.500 2v10c1.500 0 4 0 5.500 1.500 1.500-1.500 4-1.500 5.500-1.500V2C11 2 8.500 2 7 3.500zM7 3.500v10" fill="none" stroke="#666"/></svg>Story 1</span>
  <span class="tab add"><svg width="16" height="16" viewBox="0 0 16 16"><path d="M8 11.500H.5V.5h10V7" fill="none" stroke="#666"/><path d="M3.500 9V6M5.500 9V3M7.500 9V5" stroke="#666"/><path d="M11.500 8v7M8 11.500h7" stroke="#444" stroke-width="1.500"/></svg></span>
  <span class="tab add"><svg width="16" height="16" viewBox="0 0 16 16"><path d="M8 11.500H.5V.5h10V7M5.500.5v11M.5 6h10" fill="none" stroke="#666"/><path d="M11.500 8v7M8 11.500h7" stroke="#444" stroke-width="1.500"/></svg></span>
  <span class="tab add"><svg width="16" height="16" viewBox="0 0 16 16"><path d="M5.500 2C4 1 2 1 .5 1v10c1.500 0 3.500 0 5 1 1-.7 2-.9 3-1M5.500 2c1.500-1 3.500-1 5-1v6M5.500 2v10" fill="none" stroke="#666"/><path d="M11.500 8v7M8 11.500h7" stroke="#444" stroke-width="1.500"/></svg></span>
</nav>

<footer class="status">
  <i class="st s999"></i><i class="st s127"></i><i class="st s27"></i><i class="st s27"></i><i class="st s48"></i>
  <div class="st-nav">
    <svg width="8" height="9" viewBox="0 0 8 9"><path d="M1.500 1v7M7 1L3 4.500 7 8z" fill="#bbb" stroke="#bbb"/></svg>
    <svg width="8" height="9" viewBox="0 0 8 9"><path d="M7 1L3 4.500 7 8z" fill="#bbb"/></svg>
    <svg width="8" height="9" viewBox="0 0 8 9"><path d="M1 1l4 3.500L1 8z" fill="#bbb"/></svg>
    <svg width="8" height="9" viewBox="0 0 8 9"><path d="M6.500 1v7M1 1l4 3.500L1 8z" fill="#bbb" stroke="#bbb"/></svg>
  </div>
  <i class="st s1"></i>
  <div class="st-view">
    <svg width="11" height="11" viewBox="0 0 11 11"><path d="M0 0h3v3H0zM4 0h3v3H4zM8 0h3v3H8zM0 4h3v3H0zM4 4h3v3H4zM8 4h3v3H8zM0 8h3v3H0zM4 8h3v3H4zM8 8h3v3H8z" fill="#aaa"/></svg>
    <svg width="11" height="11" viewBox="0 0 11 11"><path d="M0 0h11v8H0zM0 9h3v2H0zM4 9h3v2H4zM8 9h3v2H8z" fill="#aaa"/></svg>
    <svg width="11" height="11" viewBox="0 0 11 11"><path d="M0 0h11v11H0z" fill="#555"/></svg>
  </div>
</footer>

<div class="taskbar">
  <span class="tk"><svg width="16" height="16" viewBox="0 0 16 16"><path d="M0 2.300l6.800-1v6.300H0zM7.600 1.200L16 0v7.600H7.600zM0 8.400h6.800v6.300l-6.800-1zM7.600 8.400H16V16l-8.400-1.200z" fill="#fff"/></svg></span>
  <span class="tk"><svg width="18" height="18" viewBox="0 0 18 18"><circle cx="11" cy="7" r="5.500" fill="none" stroke="#fff" stroke-width="1.200"/><path d="M7 11l-6 6" stroke="#fff" stroke-width="1.500"/></svg></span>
  <span class="tk"><svg width="18" height="16" viewBox="0 0 18 16"><path d="M1 .5h13M1 15.500h13M2.500 4.500h10v7h-10zM16 .500v3M16 6v3M16 12v3" fill="none" stroke="#fff"/></svg></span>
  <span class="tk line"><svg width="24" height="24" viewBox="0 0 24 24"><path d="M2 13C2 5 8 1 14 1c5 0 9 4 9 10v3H8c0 5 7 7 13 3v5c-7 3-16 1-17-7 0 2 0 1-2-2zM8 10h9c0-5-8-5-9 0z" fill="#0a78d7"/></svg></span>
  <span class="tk line"><svg width="24" height="22" viewBox="0 0 24 22"><path d="M1 2h8l2 2h12v17H1z" fill="#f3c765"/><path d="M1 6h22v15H1z" fill="#fbe39a"/><path d="M7 13h10v8h-3v-4h-4v4H7z" fill="#3a9ad9"/></svg></span>
  <span class="tk"><svg width="23" height="25" viewBox="0 0 23 25"><path d="M7 7V4a4 4 0 0 1 9 0v3" fill="none" stroke="#eee" stroke-width="1.400"/><path d="M0 7h23v18H0z" fill="#f2f2f2"/><path d="M7 11h4v4H7z" fill="#f25022"/><path d="M12 11h4v4h-4z" fill="#7fba00"/><path d="M7 16h4v4H7z" fill="#00a4ef"/><path d="M12 16h4v4h-4z" fill="#ffb900"/></svg></span>
  <span class="tk"><svg width="24" height="24" viewBox="0 0 24 24"><path d="M0 10L12 1l12 9v13H0z" fill="#0c75c6"/><path d="M0 10l12 8 12-8v13H0z" fill="#29a8ea"/><path d="M0 10l12 8 12-8-12-5z" fill="#b5e0f7"/></svg></span>
  <span class="tk"><svg width="24" height="24" viewBox="0 0 24 24"><path d="M8 4l14-2 1 12-14 2z" fill="#3e7fb8"/><path d="M12 9l2 2 4-4" fill="none" stroke="#cfe6f7"/><path d="M2 17l9-1 3 3-11 3z" fill="#cfcfcf"/><path d="M3 22l11-3v1l-11 3z" fill="#888"/></svg></span>
  <span class="tk line"><svg width="24" height="24" viewBox="0 0 24 24"><circle cx="12" cy="12" r="12" fill="#e53935"/><path d="M12 12L1.600 6A12 12 0 0 0 12 24z" fill="#43a047"/><path d="M12 12v12a12 12 0 0 0 10.400-18z" fill="#fbc02d"/><circle cx="12" cy="12" r="5.500" fill="#1a73e8" stroke="#fff" stroke-width="1.500"/></svg></span>
  <span class="tk line active"><svg width="24" height="24" viewBox="0 0 24 24"><rect width="24" height="24" fill="#f1f4f7"/><path d="M12 3v18M3 12h18M8 12h8M12 8v8M6 5v4M4 7h4M18 5v4M16 7h4M6 15v4M4 17h4M18 15v4M16 17h4" stroke="#5b9bd0" fill="none"/></svg></span>
  <span class="tk line"><svg width="20" height="20" viewBox="0 0 20 20"><circle cx="10" cy="10" r="5.500" fill="none" stroke="#fff" stroke-width="3"/><path d="M10 0v4M10 16v4M0 10h4M16 10h4M3 3l3 3M14 14l3 3M17 3l-3 3M6 14l-3 3" stroke="#fff" stroke-width="3"/></svg></span>
  <div class="tray">
    <svg class="t-people" width="16" height="16" viewBox="0 0 16 16"><circle cx="10.500" cy="4" r="2.500" fill="none" stroke="#fff"/><circle cx="5" cy="7.500" r="2.500" fill="none" stroke="#fff"/><path d="M1 15c0-3 2-4.500 4-4.500s3.500 1.500 4 4.500M9.500 8c3 0 5 1 5.500 4" fill="none" stroke="#fff"/></svg>
    <svg class="t-up" width="12" height="8" viewBox="0 0 12 8"><path d="M1 7l5-5 5 5" fill="none" stroke="#fff" stroke-width="1.200"/></svg>
    <svg class="t-wifi" width="14" height="14" viewBox="0 0 14 14"><path d="M1 13c0-7 5-12 12-12M4.500 13c0-5 3.500-8.500 8.500-8.500M8 13c0-3 2-5 5-5" fill="none" stroke="#ccc" stroke-dasharray="1.500 1"/><circle cx="12" cy="12" r="1.500" fill="#fff"/></svg>
    <svg class="t-batt" width="16" height="16" viewBox="0 0 16 16"><path d="M0 3h13v8H0z" fill="#fff"/><circle cx="11.500" cy="10.500" r="4.500" fill="#2a9d3f"/><path d="M11.500 7v7" stroke="#fff" stroke-width="1.500"/></svg>
    <svg class="t-vol" width="16" height="14" viewBox="0 0 16 14"><path d="M1 5h3l3-3v10L4 9H1zM10 4c1 2 1 4 0 6M12.500 2c2 3 2 7 0 10" fill="none" stroke="#fff"/></svg>
    <div class="clock"><span>01:41</span><span>Oct 16, 2023</span></div>
    <span class="notif"><svg width="16" height="15" viewBox="0 0 16 15"><path d="M0 0h16v11H6l-3 4v-4H0z" fill="#fff"/><path d="M3 3h10M3 6h10M3 9h6" stroke="#111"/></svg><b class="badge">1</b></span>
  </div>
</div>

<div class="activate"><p class="a1">Activate Windows</p><p class="a2">Go to Settings to activate Windows.</p></div>
</body>
</html>
```

FILE: styles.css
```css
* { box-sizing: border-box; }
html, body { margin: 0; padding: 0; }
body {
  width: 1366px; height: 768px; overflow: hidden; position: relative;
  display: flex; flex-direction: column; background: #fff;
  font-family: "Open Sans", "Noto Sans", sans-serif; font-size: 12px; color: #555;
}
.sprite { position: absolute; }
p, h3, ul { margin: 0; padding: 0; }
ul { list-style: none; }
i, b { display: block; font-style: normal; }

.titlebar { height: 22px; display: flex; align-items: center; padding-left: 4px; color: #222; flex: none; }
.title-icon { flex: none; }
.title-text { margin-left: 4px; font-size: 12px; letter-spacing: -.35px; }
.win-controls { margin-left: auto; display: grid; grid-template-columns: 46px 46px 46px; width: 138px; margin-right: 0; justify-items: center; transform: translate(-2px, -2px); }

.menubar { height: 21px; flex: none; display: grid; grid-template-columns: 34px 40px 72px 73px 43px 59px 40px 54px 49px 59px 40px; padding-left: 8px; align-items: center; color: #111; font-size: 11.500px; letter-spacing: -.12px; }
.menubar span { white-space: nowrap; }

.toolbar { height: 41px; flex: none; display: flex; align-items: center; padding-left: 11px; background: #f3f3f3; }
.ic { width: 24px; height: 24px; flex: none; }
.sign { margin-left: auto; margin-right: 119px; }
.div { width: 1px; height: 34px; background: #d4d4d4; flex: none; }
.caret { width: 8px; height: 4px; flex: none; border-left: 4px solid transparent; border-right: 4px solid transparent; border-top: 4px solid #555; box-sizing: border-box; transform: scale(.75); }
.caret.off { border-top-color: #c4c4c4; }
.m1 { margin-left: 1px; } .m3 { margin-left: 3px; } .m4 { margin-left: 4px; } .m5 { margin-left: 5px; }
.m6 { margin-left: 6px; } .m7 { margin-left: 7px; } .m8 { margin-left: 8px; } .m9 { margin-left: 9px; }
.m10 { margin-left: 10px; } .m11 { margin-left: 11px; } .m12 { margin-left: 12px; } .m15 { margin-left: 15px; } .m16 { margin-left: 16px; }
.tb-select { width: 103px; height: 23px; border: 1px solid #d4d4d4; border-radius: 2px; display: flex; align-items: center; justify-content: flex-end; padding-right: 4px; }

.workspace { height: 593px; flex: none; display: flex; background: #fafafa; }
.side { width: 210px; flex: none; display: flex; flex-direction: column; border-right: 1px solid #c8c8c8; }
.side-tabs { height: 26px; flex: none; display: flex; align-items: center; position: relative; }
.stab { height: 26px; line-height: 26px; font-size: 13px; }
.stab.active { width: 114px; padding-left: 18px; font-weight: 700; color: #333; letter-spacing: -.2px; background: #fafafa; }
.stab:not(.active) { flex: 1; padding-left: 12px; border-left: 1px solid #c8c8c8; border-bottom: 1px solid #c8c8c8; color: #555; }
.collapse { position: absolute; left: 195px; top: 7px; }
.side-body { flex: 1; display: flex; min-height: 0; }
.side-col { width: 193px; flex: none; display: flex; flex-direction: column; }
.sec { border-bottom: 1px solid #c8c8c8; flex: none; }
.sec h3 { font-size: 13px; font-weight: 600; color: #333; padding-left: 18px; }
.sec-dash { height: 102px; padding-top: 13px; }
.device { height: 20px; line-height: 20px; margin-left: 18px; margin-right: 2px; font-size: 13px; color: #555; padding-left: 13px; }
.device.selected { background: #e6e6e6; }
.device.phone { padding-left: 23px; }
.btn { margin: 12px 0 0 39px; width: 130px; height: 23px; line-height: 20px; border: 1px solid #c4c4c4; border-radius: 1px; text-align: center; font-size: 12px; color: #555; background: #fafafa; }
.sec-size { height: 73px; padding-top: 5px; }
.size-select { margin: 4px 1px 0 18px; height: 24px; border-bottom: 1px solid #c8c8c8; display: flex; align-items: center; justify-content: space-between; padding: 0 0 1px 1px; font-size: 12px; letter-spacing: -.15px; color: #555; white-space: nowrap; }
.sec-sheets { height: 163px; padding-top: 5px; }
.sheets { height: 109px; margin-top: 11px; overflow: hidden; }
.sheets li { height: 20px; display: flex; align-items: center; padding-left: 19px; gap: 11px; font-size: 12px; letter-spacing: .2px; color: #555; }
.sec-objects { border-bottom: 0; flex: 1; min-height: 0; display: flex; flex-direction: column; padding-top: 2px; }
.sec .obj-title { padding-left: 12px; height: 24px; line-height: 18px; }
.obj-wrap { flex: 1; min-height: 0; display: flex; }
.objects { flex: 1; padding-top: 5px; overflow: hidden; }
.objects li { height: 20px; display: flex; align-items: center; padding-left: 16px; gap: 7px; font-size: 12px; color: #555; white-space: nowrap; }
.objects svg { width: 12px; height: 13px; flex: none; }
.inner-scroll { width: 12px; flex: none; padding: 2px 0 0 1px; background: #f4f4f4; display: flex; flex-direction: column; align-items: center; }
.inner-thumb { width: 10px; height: 122px; background: #c4c4c4; margin-top: 4px; }
.up-tri { border-left: 4px solid transparent; border-right: 4px solid transparent; border-bottom: 5px solid #c4c4c4; margin-top: 3px; }
.down-tri { border-left: 4px solid transparent; border-right: 4px solid transparent; border-top: 5px solid #666; margin-top: auto; margin-bottom: 7px; }
.outer-scroll { flex: 1; display: flex; flex-direction: column; align-items: center; background: #f2f2f2; }
.chev { flex: none; height: 18px; padding: 5px 0 3px; }
.outer-thumb { flex: none; width: 100%; height: 478px; background: #c8c8c8; }
.chev.end { margin-top: auto; height: 18px; }

.canvas { flex: 1; display: flex; background: #f1f1f1; padding: 7px 0 0 7px; min-width: 0; }
.frame { width: 964px; flex: none; background: #fff; border-left: 2px solid #c4c4c4; border-top: 2px solid #c4c4c4; display: flex; flex-direction: column; padding-left: 3px; overflow: hidden; }
.chart-head { height: 24px; flex: none; display: flex; border-bottom: 1px solid #c8c8c8; }
.loc-label { width: 160px; padding-right: 5px; text-align: right; font-size: 12px; letter-spacing: .15px; color: #333; line-height: 30px; }
.loc-rest { flex: 1; margin-top: 3px; border-left: 1px solid #d0d0d0; }
.rows { flex: 1; min-height: 0; overflow: hidden; }
.row { height: 20px; display: flex; }
.lab { width: 160px; height: 20px; flex: none; padding-right: 5px; text-align: right; color: #808080; font-size: 12px; letter-spacing: .18px; line-height: 21px; white-space: nowrap; overflow: hidden; }
.pl { width: 399px; flex: none; border-left: 1px solid #d0d0d0; padding-top: 2px; background: repeating-linear-gradient(90deg, transparent 0, transparent 48.700px, #f0f0f0 48.700px, #f0f0f0 49.700px); }
.pr { flex: 1; border-left: 1px solid #c4c4c4; padding-top: 2px; background: repeating-linear-gradient(90deg, transparent 0, transparent 77px, #f0f0f0 77px, #f0f0f0 78px); }
.bar { height: 15px; background: #e15759; }
.strip { width: 22px; flex: none; background: #f1f1f1; border-left: 1px solid #c8c8c8; border-right: 2px solid #c8c8c8; }
.blank { flex: 1; margin-left: 6px; background: #fff; }
.right-scroll { width: 16px; flex: none; background: #f4f4f4; display: flex; align-items: flex-end; justify-content: center; padding-bottom: 5px; }

.showme-tab { position: absolute; left: 1251px; top: 48px; width: 111px; height: 37px; background: #fafafa; border: 1px solid #dcdcdc; border-bottom: 0; display: flex; align-items: center; padding-left: 11px; gap: 6px; font-size: 13px; letter-spacing: -.1px; color: #444; z-index: 3; }
.showme { position: absolute; left: 1159px; top: 84px; width: 203px; height: 556px; background: #fafafa; border: 1px solid #dcdcdc; box-shadow: 2px 2px 2px #b8b8b8; z-index: 2; }
.thumbs { display: grid; grid-template-columns: repeat(3, 56px); grid-auto-rows: 42px; column-gap: 4px; row-gap: 4px; padding: 14px 0 0 12px; }
.thumb { background: #fff; border: 1px solid #e0e0e0; }
.thumb svg { display: block; width: 100%; height: 100%; }
.t-txt { font-family: "Open Sans", sans-serif; font-size: 5px; fill: #cfcfcf; }
.select-view { margin: 18px 0 0 14px; font-family: "Liberation Sans", sans-serif; font-size: 12px; font-weight: 700; color: #222; }

.tabs { height: 30px; flex: none; display: grid; grid-template-columns: 131px 55px 57px 57px 57px 57px 57px 56px 57px 103px 104px 104px 104px 71px 32px 32px 32px 1fr; background: #e6e6e6; border-top: 1px solid #c8c8c8; border-bottom: 1px solid #d0d0d0; font-size: 12px; color: #777; }
.tab { display: flex; align-items: center; justify-content: center; gap: 5px; border-right: 1px solid #d0d0d0; white-space: nowrap; }
.tab.ds { justify-content: flex-start; padding-left: 9px; }
.tab.current { background: #fff; font-weight: 600; color: #555; border-top: 1px solid #fff; }
.status { height: 21px; flex: none; display: flex; align-items: center; background: #ebebeb; }
.st { height: 21px; flex: none; border-right: 1px solid #d6d6d6; }
.s999 { width: 999px; } .s127 { width: 128px; } .s27 { width: 27px; } .s48 { width: 48px; }
.s1 { width: 1px; margin-left: 0; }
.st-nav { width: 70px; flex: none; display: flex; align-items: center; justify-content: center; gap: 7px; }
.st-view { flex: 1; display: flex; align-items: center; gap: 10px; padding-left: 8px; }

.taskbar { height: 40px; flex: none; display: flex; align-items: center; padding-left: 0; background: #0a0b0f; background-image: linear-gradient(90deg, #05060a 0, #0c0d12 450px, #14161c 700px, #0d0f16 1000px, #07080b 1366px); color: #fff; }
.tk { width: 49.200px; height: 40px; flex: none; display: flex; align-items: center; justify-content: center; position: relative; }
.tk:first-child { width: 47px; }
.tk.line::after { content: ""; position: absolute; left: 5px; right: 5px; bottom: 0; height: 2px; background: #76b9ed; }
.tk.active { background: #2b2d33; }
.tk.active::after { left: 0; right: 0; }
.tray { flex: 1; display: flex; align-items: center; height: 40px; }
.t-people { margin-left: 570px; }
.t-up { margin-left: 21px; }
.t-wifi { margin-left: 12px; }
.t-batt { margin-left: 9px; }
.t-vol { margin-left: 8px; }
.clock { width: 76px; margin-left: 3px; display: flex; flex-direction: column; align-items: center; font-size: 11.500px; line-height: 19px; letter-spacing: -.2px; color: #eee; }
.notif { position: relative; margin-left: 11px; display: block; }
.badge { position: absolute; left: 7px; top: 7px; width: 13px; height: 13px; border-radius: 50%; background: #222; border: 1px solid #aaa; font-size: 9px; line-height: 11px; text-align: center; font-weight: 700; color: #fff; }

.activate { position: absolute; left: 1073px; top: 651px; color: rgba(0, 0, 0, .24); z-index: 4; white-space: nowrap; }
.a1 { font-size: 19px; line-height: 23px; }
.a2 { font-size: 14.400px; line-height: 23px; }
```
